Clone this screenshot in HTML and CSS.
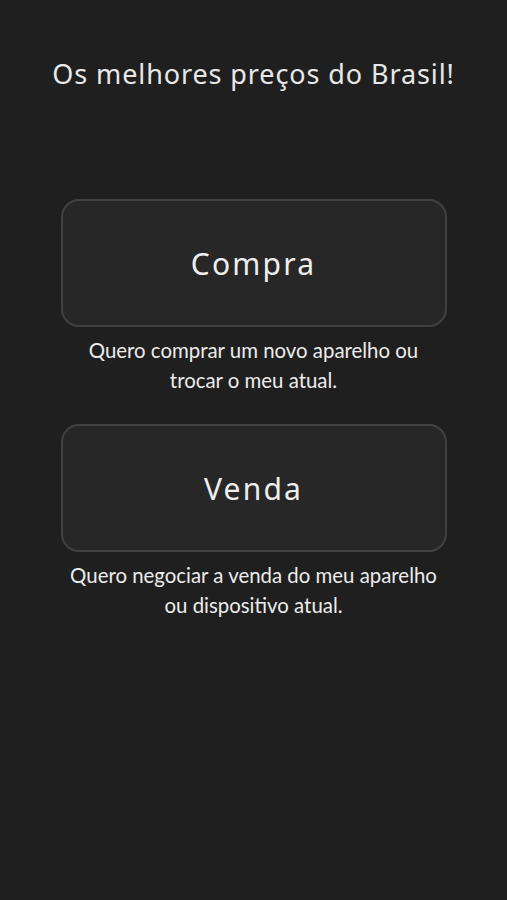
FILE: index.html
```html
<!DOCTYPE html>
<html lang="pt-BR">
<head>
<meta charset="utf-8">
<link rel="stylesheet" href="styles.css">
</head>
<body>
<main class="page">
  <h1 class="title">Os melhores preços do Brasil!</h1>
  <section class="options">
    <div class="option">
      <button class="option-btn">Compra</button>
      <p class="option-desc">Quero comprar um novo aparelho ou<br>trocar o meu atual.</p>
    </div>
    <div class="option">
      <button class="option-btn">Venda</button>
      <p class="option-desc">Quero negociar a venda do meu aparelho<br>ou dispositivo atual.</p>
    </div>
  </section>
</main>
</body>
</html>
```

FILE: styles.css
```css
html, body {
  margin: 0;
  padding: 0;
  background: #1f1f1f;
  height: 100%;
}
.page {
  display: flex;
  flex-direction: column;
  align-items: center;
  min-height: 900px;
  font-family: "Lato", "Noto Sans", sans-serif;
  color: #ececec;
}
.title {
  margin: 56px 0 0;
  font-family: "Noto Sans", sans-serif;
  font-weight: 400;
  font-size: 27px;
  line-height: 36px;
  letter-spacing: 0.9px;
  color: #e8e8e8;
  white-space: nowrap;
}
.options {
  margin-top: 107px;
  display: flex;
  flex-direction: column;
  gap: 29px;
  width: 386px;
}
.option {
  display: flex;
  flex-direction: column;
  align-items: center;
}
.option-btn {
  width: 386px;
  height: 128px;
  box-sizing: border-box;
  background: #272727;
  border: 2px solid #414141;
  border-radius: 18px;
  color: #eeeeee;
  font-family: "Noto Sans", sans-serif;
  font-size: 30px;
  letter-spacing: 2.2px;
  font-weight: 400;
  padding: 0;
}
.option-desc {
  margin: 8px 0 0;
  text-align: center;
  font-size: 20.4px;
  line-height: 30px;
  white-space: nowrap;
  color: #ececec;
}
```
